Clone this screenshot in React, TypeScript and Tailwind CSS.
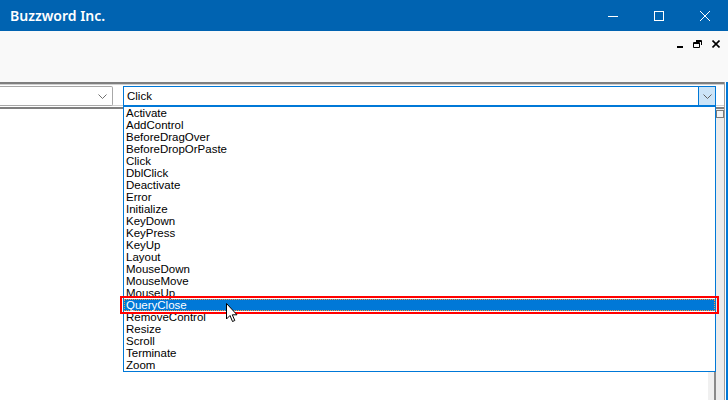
import React from "react";

const events = [
  "Activate",
  "AddControl",
  "BeforeDragOver",
  "BeforeDropOrPaste",
  "Click",
  "DblClick",
  "Deactivate",
  "Error",
  "Initialize",
  "KeyDown",
  "KeyPress",
  "KeyUp",
  "Layout",
  "MouseDown",
  "MouseMove",
  "MouseUp",
  "QueryClose",
  "RemoveControl",
  "Resize",
  "Scroll",
  "Terminate",
  "Zoom",
];

function Chevron({ color = "#606060" }: { color?: string }) {
  return (
    <svg width="9" height="5" viewBox="0 0 9 5">
      <path d="M0.5 0.5 L4.5 4.5 L8.5 0.5" fill="none" stroke={color} strokeWidth="1" />
    </svg>
  );
}

export default function App() {
  const selected = "QueryClose";

  return (
    <div className="relative w-[728px] h-[400px] overflow-hidden bg-white font-['Liberation_Sans',sans-serif]">
      {/* title bar */}
      <div className="h-[31px] bg-[#0063b1] flex items-center">
        <span className="pl-[10px] text-white text-[14px] font-semibold font-['Noto_Sans',sans-serif]">
          Buzzword Inc.
        </span>
        <div className="ml-auto flex h-full">
          <div className="w-[46px] h-full flex items-center justify-center">
            <svg width="10" height="10" viewBox="0 0 10 10">
              <path d="M0 5.5 H10" stroke="white" strokeWidth="1" />
            </svg>
          </div>
          <div className="w-[46px] h-full flex items-center justify-center">
            <svg width="10" height="10" viewBox="0 0 10 10">
              <rect x="0.5" y="0.5" width="9" height="9" fill="none" stroke="white" strokeWidth="1" />
            </svg>
          </div>
          <div className="w-[46px] h-full flex items-center justify-center">
            <svg width="10" height="10" viewBox="0 0 10 10">
              <path d="M0 0 L10 10 M10 0 L0 10" stroke="white" strokeWidth="1" />
            </svg>
          </div>
        </div>
      </div>

      {/* menu / toolbar area */}
      <div className="h-[51px] bg-[#f9f9f9] flex justify-end items-start pt-[9px] pr-[8px] gap-[10px]">
        <svg width="7" height="8" viewBox="0 0 7 8" className="mt-[1px]">
          <rect x="1" y="5" width="6" height="2" fill="black" />
        </svg>
        <svg width="9" height="8" viewBox="0 0 9 8">
          <path d="M3 0.5 H8.5 V5 M0.5 2.5 H6.5 V7.5 H0.5 Z M0.5 3.5 H6.5 M3 1.5 H8.5" fill="none" stroke="black" strokeWidth="1" />
        </svg>
        <svg width="8" height="8" viewBox="0 0 8 8">
          <path d="M0.5 0.5 L7.5 7.5 M7.5 0.5 L0.5 7.5" stroke="black" strokeWidth="1.6" />
        </svg>
      </div>

      {/* lower area */}
      <div className="flex h-[318px]">
        <div className="flex-1 flex flex-col">
          {/* combo strip */}
          <div className="border-t-2 border-[#7f7f7f]">
            <div className="border-t border-[#cfcfcf]">
              <div className="h-[20px] flex items-start pr-[8px]">
                <div className="mt-[1px] w-[113px] h-[20px] border border-l-0 border-[#a8a8a8] bg-white flex items-center justify-end pr-[5px] rounded-r-[2px]">
                  <Chevron color="#707070" />
                </div>
                <div className="ml-[10px] mt-[1px] w-[593px] h-[20px] border border-[#0078d7] bg-white flex items-center">
                  <span className="pl-[3px] text-[11.5px] leading-[12px] text-black">Click</span>
                  <div className="ml-auto w-[17px] h-full bg-[#cce4f7] border-l border-[#0078d7] flex items-center justify-center">
                    <Chevron />
                  </div>
                </div>
              </div>
              <div className="border-t border-[#cfcfcf] h-[2px] bg-white" />
              <div className="h-[2px] bg-[#7f7f7f]" />
            </div>
          </div>
          {/* code window */}
          <div className="flex-1 flex bg-white">
            <div className="flex-1" />
            <div className="w-[6px] bg-[#f0f0f0]" />
            <div className="w-[2px] bg-[#8a8a8a]" />
            <div className="w-[8px] bg-[#ececec] flex flex-col">
              <div className="mt-[1px] h-[8px] border border-[#7a7a7a] bg-[#f4f4f4]" />
            </div>
          </div>
        </div>
        <div className="w-[1px] bg-[#a0a0a0]" />
        <div className="w-[1px] bg-white" />
        <div className="w-[2px] bg-[#0078d7]" />
      </div>

      {/* dropdown list */}
      <div className="absolute left-[123px] top-[106px] w-[593px] border border-t-0 border-[#0078d7] bg-white">
        <div className="border-t-2 border-[#0078d7] -mt-[1px]" />
        {events.map((name) => (
          <div
            key={name}
            className={
              name === selected
                ? "h-[12px] leading-[11px] text-[11.5px] pl-[1px] bg-[#0078d7] text-white border border-dotted border-[#ff9a3c]"
                : "h-[12px] leading-[12px] text-[11.5px] pl-[2px] text-black"
            }
          >
            {name}
          </div>
        ))}
      </div>

      {/* red highlight frame */}
      <div className="absolute left-[120px] top-[296px] w-[599px] h-[18px] border-2 border-[#ff0000]" />

      {/* mouse cursor */}
      <svg className="absolute left-[226px] top-[303px]" width="12" height="20" viewBox="0 0 12 20">
        <path
          d="M0.5 0.5 V16 L4 12.5 L6.5 18.5 L8.8 17.5 L6.3 11.8 H11 Z"
          fill="white"
          stroke="black"
          strokeWidth="1"
          strokeLinejoin="miter"
        />
      </svg>
    </div>
  );
}
